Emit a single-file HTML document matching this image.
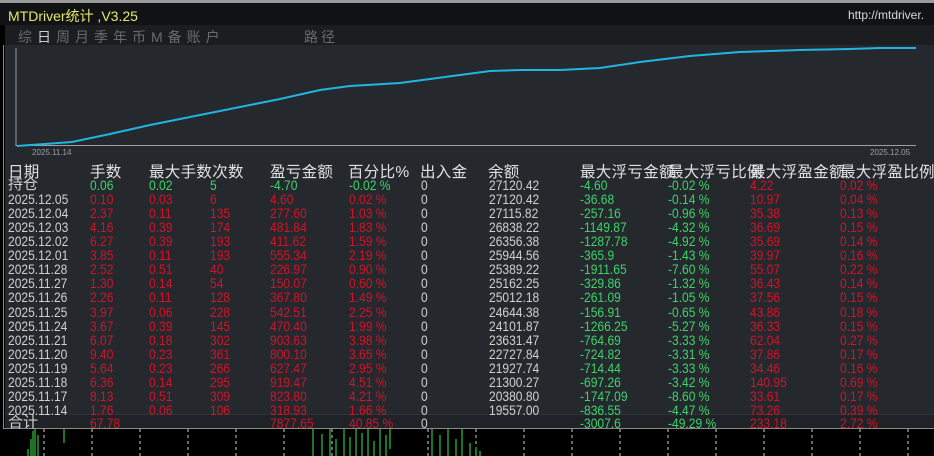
<!DOCTYPE html>
<html><head><meta charset="utf-8"><style>
body{margin:0;width:934px;height:456px;overflow:hidden;background:#000;position:relative;font-family:"Liberation Sans","Noto Sans CJK SC",sans-serif;}
.a{position:absolute;white-space:nowrap;}
#top{left:0;top:0;width:934px;height:3px;background:#9a9a9a;}
#title{left:0;top:3px;width:934px;height:22px;background:#111214;}
#tabs{left:5px;top:25px;width:929px;height:20px;background:#1b1d20;}
#panel{left:5px;top:45px;width:929px;height:383px;background:#25282d;}
#tot{left:5px;top:414px;width:929px;height:14px;background:#1f2226;border-top:1px solid #2f3237;}
#bl{left:3px;top:428px;width:931px;height:1px;background:#8a8a8a;}
#ll{left:3px;top:45px;width:1px;height:384px;background:#8a8a8a;}
.r{position:absolute;left:0;height:14px;font-size:14px;line-height:14px;color:#d0d0d0;}
.r span{position:absolute;white-space:nowrap;transform:scaleX(0.86);transform-origin:0 50%;}
.R{color:#d0142a}.G{color:#3ad46a}
.h{position:absolute;top:160px;font-size:15.5px;color:#e0e0e0;white-space:nowrap;letter-spacing:0.3px}
</style></head><body>
<div class="a" id="top"></div>
<div class="a" id="title"></div>
<div class="a" style="left:8px;top:6px;font-size:14px;color:#e6e86c;">MTDriver统计 ,V3.25</div>
<div class="a" style="left:848px;top:8px;font-size:12px;color:#d8d8e0;">http://mtdriver.</div>
<div class="a" id="tabs"></div>
<div class="a" style="left:18px;top:27px;font-size:14px;color:#686b70;letter-spacing:5px;">综<span style="color:#c8d0d8">日</span>周月季年币M备账户</div>
<div class="a" style="left:304px;top:27px;font-size:14px;color:#686b70;letter-spacing:3px;">路径</div>
<div class="a" id="panel"></div>
<div class="a" id="ll"></div>
<div class="a" style="left:0;top:45px;width:3px;height:411px;background:#000"></div>
<svg class="a" style="left:0;top:0" width="934" height="160">
<line x1="16" y1="48" x2="16" y2="146" stroke="#9aa0a8" stroke-width="1"/>
<line x1="16" y1="145.5" x2="916" y2="145.5" stroke="#9aa0a8" stroke-width="1"/>
<polyline fill="none" stroke="#22b4e0" stroke-width="2" points="17,146 45,144 72,142 110,134 150,125 190,117 235,108 280,99 320,90 350,86 400,83 460,75 490,71 520,70 560,70 600,68 640,62 690,56 740,52 800,50 850,49 880,48 916,48"/>
<text x="32" y="155" font-size="8" fill="#9aa0a8" font-family="Liberation Sans">2025.11.14</text>
<text x="870" y="155" font-size="8" fill="#9aa0a8" font-family="Liberation Sans">2025.12.05</text>
</svg>
<div class="a" id="tot"></div>
<div class="a" id="bl"></div>
<div class="h" style="left:8px">日期</div><div class="h" style="left:90px">手数</div><div class="h" style="left:149px">最大手数次数</div><div class="h" style="left:270px">盈亏金额</div><div class="h" style="left:348px">百分比%</div><div class="h" style="left:420px">出入金</div><div class="h" style="left:488px">余额</div><div class="h" style="left:580px">最大浮亏金额</div><div class="h" style="left:668px">最大浮亏比例</div><div class="h" style="left:750px">最大浮盈金额</div><div class="h" style="left:840px">最大浮盈比例</div>
<div id="rows"></div>
<svg class="a" style="left:0;top:429px" width="934" height="27">
<g stroke="#cfcfcf" stroke-dasharray="3,3" stroke-width="1">
<line x1="44" y1="0" x2="44" y2="27"/><line x1="92" y1="0" x2="92" y2="27"/><line x1="140" y1="0" x2="140" y2="27"/><line x1="188" y1="0" x2="188" y2="27"/><line x1="236" y1="0" x2="236" y2="27"/><line x1="284" y1="0" x2="284" y2="27"/><line x1="332" y1="0" x2="332" y2="27"/><line x1="380" y1="0" x2="380" y2="27"/><line x1="428" y1="0" x2="428" y2="27"/><line x1="476" y1="0" x2="476" y2="27"/><line x1="524" y1="0" x2="524" y2="27"/><line x1="572" y1="0" x2="572" y2="27"/><line x1="620" y1="0" x2="620" y2="27"/><line x1="668" y1="0" x2="668" y2="27"/><line x1="716" y1="0" x2="716" y2="27"/><line x1="764" y1="0" x2="764" y2="27"/><line x1="812" y1="0" x2="812" y2="27"/><line x1="860" y1="0" x2="860" y2="27"/><line x1="908" y1="0" x2="908" y2="27"/>
</g>
<g stroke="#2ec040" stroke-width="1.2">
<line x1="28" y1="27" x2="28" y2="20"/><line x1="31" y1="27" x2="31" y2="10"/><line x1="33" y1="27" x2="33" y2="2"/><line x1="35" y1="27" x2="35" y2="0"/><line x1="38" y1="27" x2="38" y2="6"/><line x1="64" y1="14" x2="64" y2="0"/>
<line x1="313" y1="27" x2="313" y2="0"/><line x1="322" y1="27" x2="322" y2="5"/><line x1="330" y1="27" x2="330" y2="0"/><line x1="336" y1="27" x2="336" y2="10"/><line x1="344" y1="27" x2="344" y2="0"/><line x1="350" y1="27" x2="350" y2="8"/><line x1="356" y1="27" x2="356" y2="0"/><line x1="362" y1="27" x2="362" y2="4"/><line x1="368" y1="27" x2="368" y2="0"/><line x1="374" y1="27" x2="374" y2="12"/><line x1="380" y1="27" x2="380" y2="0"/><line x1="386" y1="27" x2="386" y2="6"/><line x1="390" y1="20" x2="390" y2="0"/>
<line x1="432" y1="27" x2="432" y2="0"/><line x1="440" y1="27" x2="440" y2="6"/><line x1="448" y1="27" x2="448" y2="0"/><line x1="456" y1="27" x2="456" y2="10"/><line x1="462" y1="27" x2="462" y2="0"/><line x1="470" y1="27" x2="470" y2="14"/><line x1="476" y1="27" x2="476" y2="18"/><line x1="480" y1="27" x2="480" y2="22"/>
</g></svg>
<script>
var d=[
["持仓","0.06","0.02","5","-4.70","-0.02 %","0","27120.42","-4.60","-0.02 %","4.22","0.02 %",1],
["2025.12.05","0.10","0.03","6","4.60","0.02 %","0","27120.42","-36.68","-0.14 %","10.97","0.04 %"],
["2025.12.04","2.37","0.11","135","277.60","1.03 %","0","27115.82","-257.16","-0.96 %","35.38","0.13 %"],
["2025.12.03","4.16","0.39","174","481.84","1.83 %","0","26838.22","-1149.87","-4.32 %","36.69","0.15 %"],
["2025.12.02","6.27","0.39","193","411.62","1.59 %","0","26356.38","-1287.78","-4.92 %","35.69","0.14 %"],
["2025.12.01","3.85","0.11","193","555.34","2.19 %","0","25944.56","-365.9","-1.43 %","39.97","0.16 %"],
["2025.11.28","2.52","0.51","40","226.97","0.90 %","0","25389.22","-1911.65","-7.60 %","55.07","0.22 %"],
["2025.11.27","1.30","0.14","54","150.07","0.60 %","0","25162.25","-329.86","-1.32 %","36.43","0.14 %"],
["2025.11.26","2.26","0.11","128","367.80","1.49 %","0","25012.18","-261.09","-1.05 %","37.56","0.15 %"],
["2025.11.25","3.97","0.06","228","542.51","2.25 %","0","24644.38","-156.91","-0.65 %","43.86","0.18 %"],
["2025.11.24","3.67","0.39","145","470.40","1.99 %","0","24101.87","-1266.25","-5.27 %","36.33","0.15 %"],
["2025.11.21","6.07","0.18","302","903.63","3.98 %","0","23631.47","-764.69","-3.33 %","62.04","0.27 %"],
["2025.11.20","9.40","0.23","361","800.10","3.65 %","0","22727.84","-724.82","-3.31 %","37.86","0.17 %"],
["2025.11.19","5.64","0.23","266","627.47","2.95 %","0","21927.74","-714.44","-3.33 %","34.46","0.16 %"],
["2025.11.18","6.36","0.14","295","919.47","4.51 %","0","21300.27","-697.26","-3.42 %","140.95","0.69 %"],
["2025.11.17","8.13","0.51","309","823.80","4.21 %","0","20380.80","-1747.09","-8.60 %","33.61","0.17 %"],
["2025.11.14","1.76","0.06","106","318.93","1.66 %","0","19557.00","-836.55","-4.47 %","73.26","0.39 %"],
["合计","67.78","","","7877.65","40.85 %","0","","-3007.6","-49.29 %","233.18","2.72 %"]];
var xs=[8,90,149,210,270,349,421,489,580,668,750,840];
var h="";
d.forEach(function(r,i){
 var y=178+i*14.06; if(i==17)y=416;
 h+='<div class="r" style="top:'+y+'px">';
 for(var c=0;c<12;c++){
  var cl="";
  if(c>=1&&c<=5) cl=r[12]?"G":"R";
  if(c==8||c==9) cl="G";
  if(c==10||c==11) cl="R";
  var fs=(c==0&&(i==0||i==17))?'font-size:15px;transform:none;':'';
  h+='<span class="'+cl+'" style="left:'+xs[c]+'px;'+fs+'">'+r[c]+'</span>';
 }
 h+='</div>';
});
document.getElementById("rows").innerHTML=h;
</script>
</body></html>
